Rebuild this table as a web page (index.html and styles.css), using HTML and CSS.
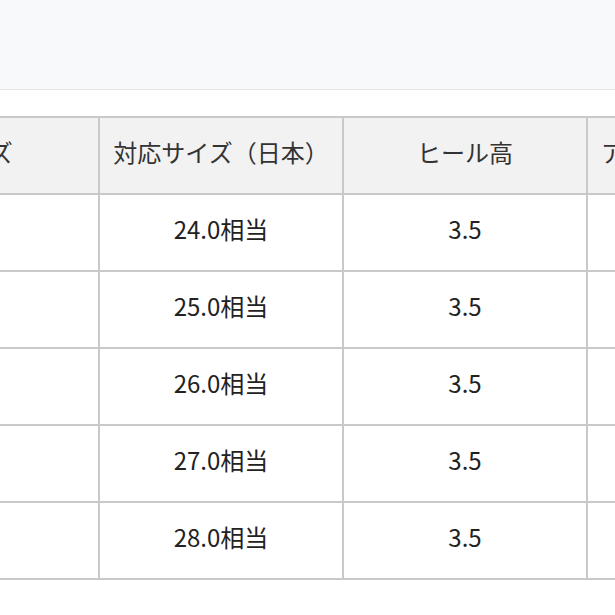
FILE: index.html
```html
<!DOCTYPE html>
<html lang="ja">
<head>
<meta charset="utf-8">
<title>サイズ表</title>
<link rel="stylesheet" href="styles.css">
</head>
<body>
<header class="topbar"></header>
<div class="table-wrap">
  <table class="size-table">
    <thead>
      <tr>
        <th>サイズ</th>
        <th>対応サイズ（日本）</th>
        <th>ヒール高</th>
        <th>アウトソール（底）</th>
      </tr>
    </thead>
    <tbody>
      <tr><td></td><td>24.0相当</td><td>3.5</td><td></td></tr>
      <tr><td></td><td>25.0相当</td><td>3.5</td><td></td></tr>
      <tr><td></td><td>26.0相当</td><td>3.5</td><td></td></tr>
      <tr><td></td><td>27.0相当</td><td>3.5</td><td></td></tr>
      <tr><td></td><td>28.0相当</td><td>3.5</td><td></td></tr>
    </tbody>
  </table>
</div>
</body>
</html>
```
FILE: styles.css
```css
html, body {
  margin: 0;
  padding: 0;
  background: #ffffff;
}

body {
  font-family: "Noto Sans CJK JP", "Noto Sans", sans-serif;
  color: #222222;
}

.topbar {
  height: 89px;
  background: #f8f9fb;
  border-bottom: 1px solid #e3e5e9;
}

.table-wrap {
  margin-top: 26px;
  overflow: hidden;
}

.size-table {
  border-collapse: separate;
  border-spacing: 0;
  margin-left: -146px;
  border-top: 2px solid #c9c9c9;
  border-left: 2px solid #c9c9c9;
  font-size: 24px;
}

.size-table th,
.size-table td {
  width: 242px;
  min-width: 242px;
  height: 69px;
  padding: 0 0 6px 0;
  text-align: center;
  vertical-align: middle;
  border-right: 2px solid #c9c9c9;
  border-bottom: 2px solid #c9c9c9;
  white-space: nowrap;
  line-height: 1.2;
}

.size-table th {
  background: #f2f2f2;
  font-weight: 400;
  color: #333333;
}

.size-table td {
  background: #ffffff;
  color: #222222;
}
```
